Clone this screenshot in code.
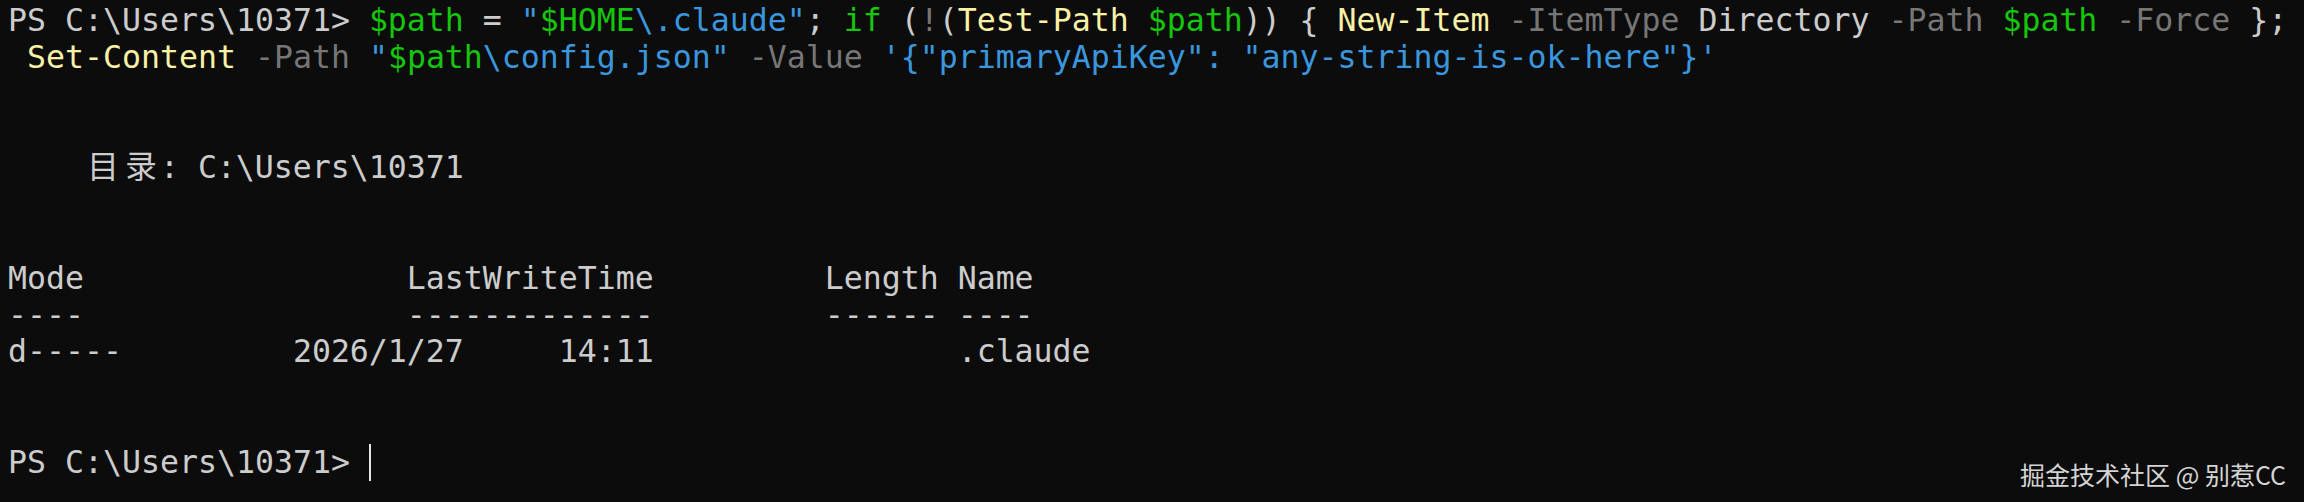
const tone = {
	d: "text-[#cccccc]",
	g: "text-[#16c60c]",
	y: "text-[#f9f1a5]",
	b: "text-[#3a96dd]",
	k: "text-[#767676]",
};

const commandLine1 = [
	["d", "PS C:\\Users\\10371> "],
	["g", "$path"],
	["d", " = "],
	["b", '"'],
	["g", "$HOME"],
	["b", '\\.claude"'],
	["d", "; "],
	["g", "if"],
	["d", " ("],
	["k", "!"],
	["d", "("],
	["y", "Test-Path"],
	["d", " "],
	["g", "$path"],
	["d", ")) { "],
	["y", "New-Item"],
	["d", " "],
	["k", "-ItemType"],
	["d", " Directory "],
	["k", "-Path"],
	["d", " "],
	["g", "$path"],
	["d", " "],
	["k", "-Force"],
	["d", " };"],
];

const commandLine2 = [
	["d", " "],
	["y", "Set-Content"],
	["d", " "],
	["k", "-Path"],
	["d", " "],
	["b", '"'],
	["g", "$path"],
	["b", '\\config.json"'],
	["d", " "],
	["k", "-Value"],
	["d", " "],
	["b", `'{"primaryApiKey": "any-string-is-ok-here"}'`],
];

const Line = ({ children }) => {
	return <div className="h-[36.83px] whitespace-pre">{children}</div>;
};

const Colored = ({ parts }) => {
	return (
		<Line>
			{parts.map(([c, text], i) => (
				<span key={i} className={tone[c]}>
					{text}
				</span>
			))}
		</Line>
	);
};

// CJK glyphs take two terminal cells
const Wide = ({ ch }) => {
	return <span className="inline-block w-[37.96px] text-center">{ch}</span>;
};

const App = () => {
	return (
		<div className="relative w-[2304px] h-[502px] overflow-hidden bg-[#0c0c0c]">
			<div
				className="pl-[8px] pt-[2px] text-[31.55px] leading-[36.83px] text-[#cccccc]"
				style={{ fontFamily: '"DejaVu Sans Mono", "Noto Sans CJK SC", monospace' }}
			>
				<Colored parts={commandLine1} />
				<Colored parts={commandLine2} />
				<Line> </Line>
				<Line> </Line>
				<Line>
					{"    "}
					<Wide ch="目" />
					<Wide ch="录" />
					{": C:\\Users\\10371"}
				</Line>
				<Line> </Line>
				<Line> </Line>
				<Line>{"Mode                 LastWriteTime         Length Name"}</Line>
				<Line>{"----                 -------------         ------ ----"}</Line>
				<Line>{"d-----         2026/1/27     14:11                .claude"}</Line>
				<Line> </Line>
				<Line> </Line>
				<Line>
					{"PS C:\\Users\\10371> "}
					<span className="inline-block w-[2px] h-[37px] align-top bg-[#e6e6e6]"></span>
				</Line>
			</div>

			<div
				className="absolute right-[18px] bottom-[15px] text-[25px] leading-none text-[#d4d4d4]"
				style={{ fontFamily: '"Noto Sans CJK SC", "Noto Sans", sans-serif' }}
			>
				掘金技术社区 @ 别惹CC
			</div>
		</div>
	);
};

export default App;
